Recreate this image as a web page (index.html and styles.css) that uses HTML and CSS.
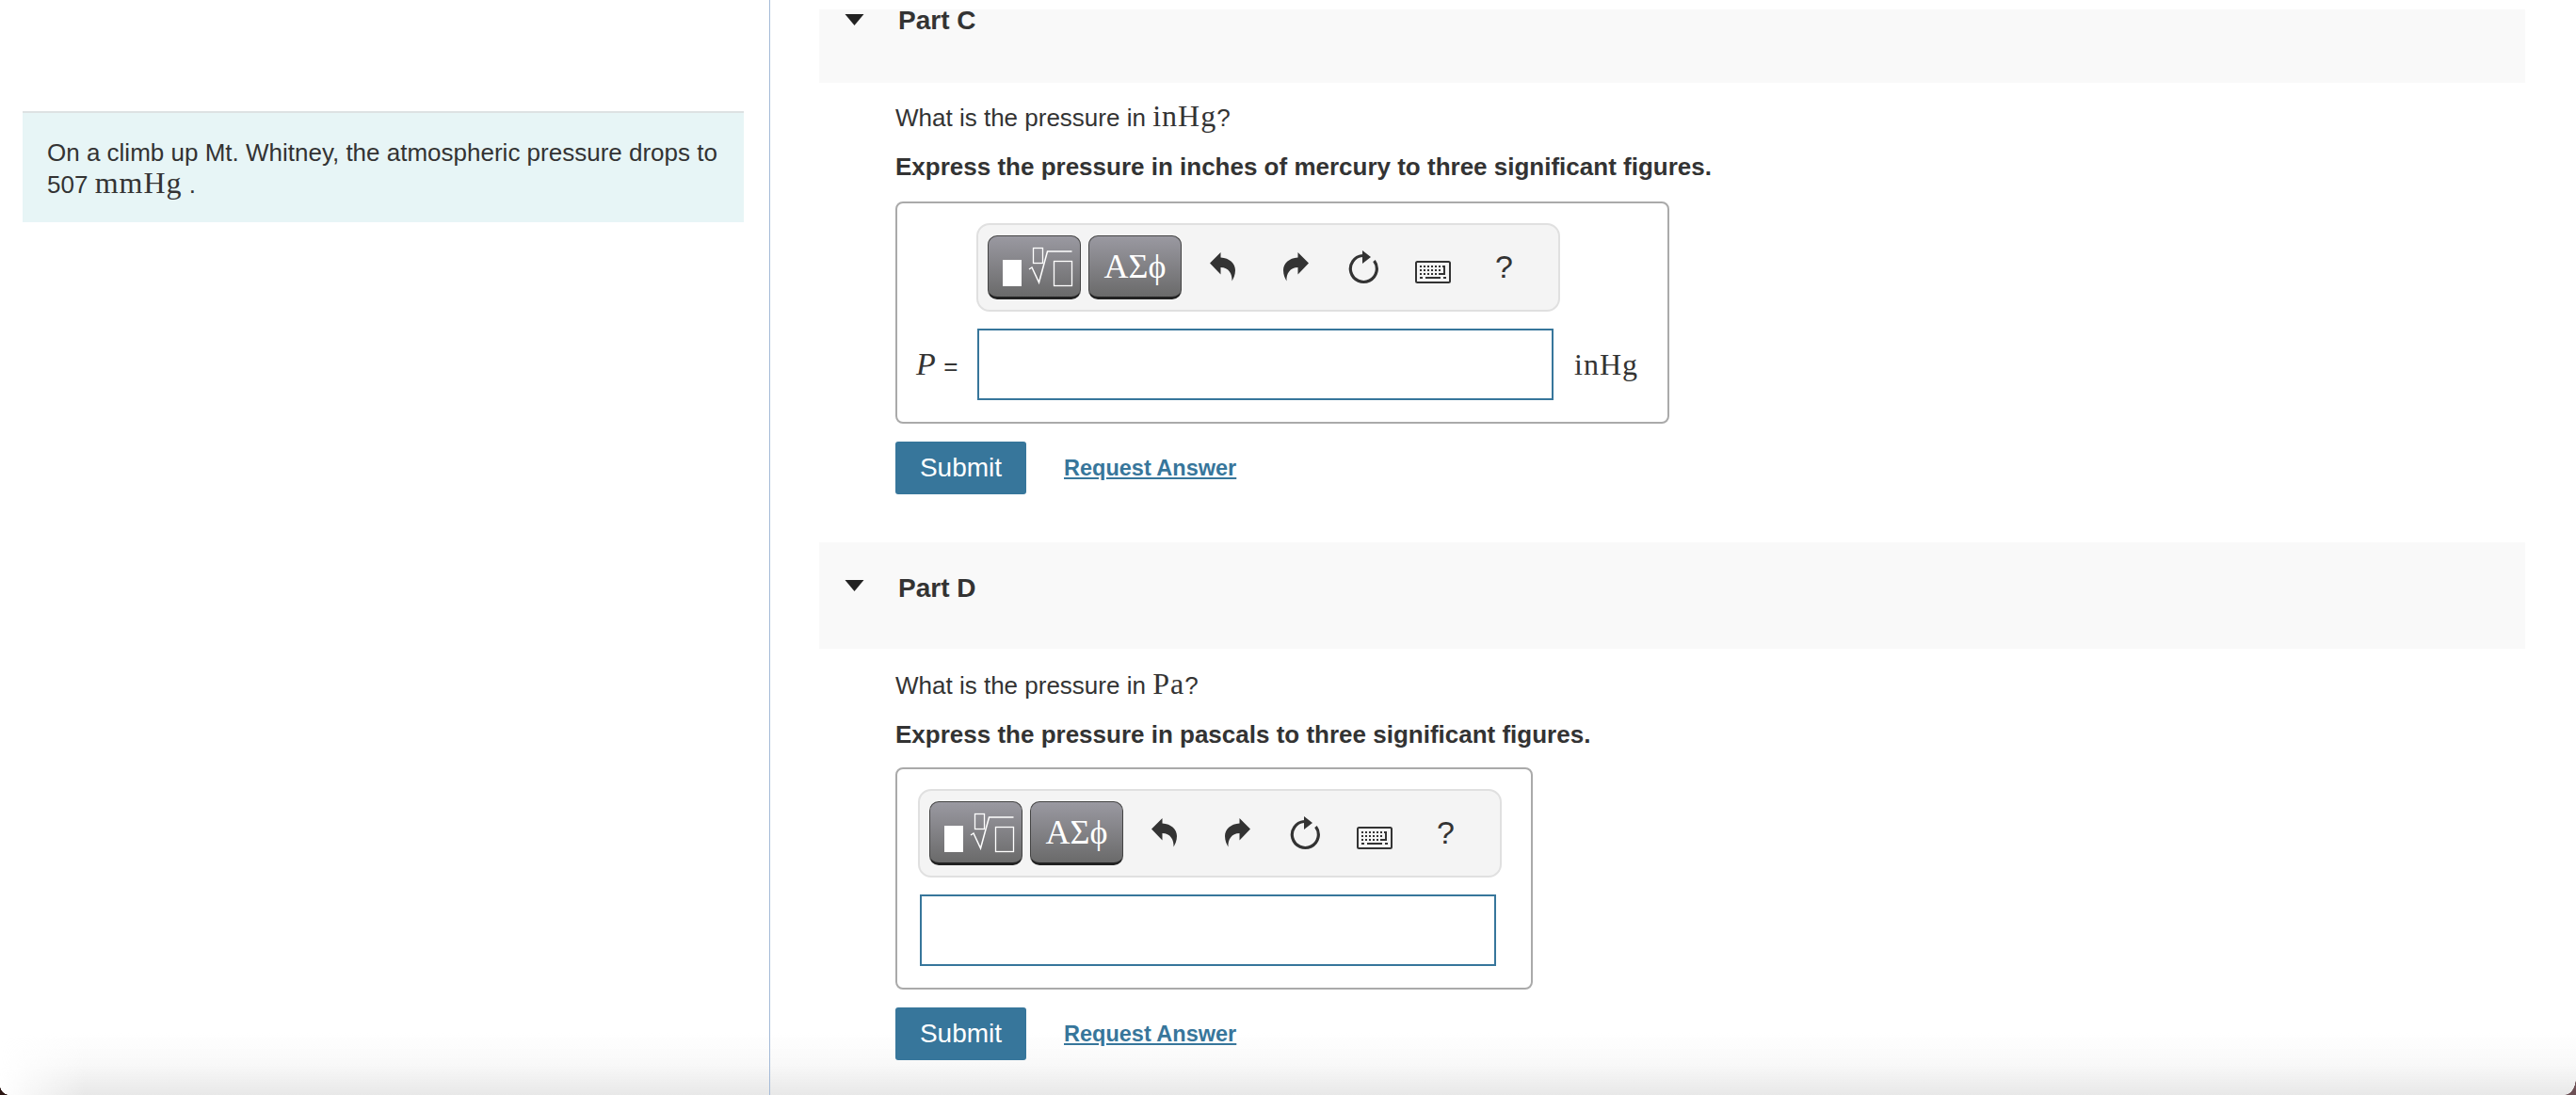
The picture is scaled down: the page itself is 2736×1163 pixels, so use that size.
FILE: index.html
```html
<!DOCTYPE html>
<html lang="en">
<head>
<meta charset="utf-8">
<title>Part C and Part D</title>
<link rel="stylesheet" href="styles.css">
</head>

<body>

<div id="container">
	<div class="side">
		<div class="intro">
			<p>On a climb up Mt. Whitney, the atmospheric pressure drops to <span class="num">507</span> <span class="math">mmHg</span> .</p>
		</div>
	</div>

	<div class="main">
		<div class="part-head part-c">
			<svg class="caret" viewBox="0 0 20 12"><path d="M0 0H20L10 12Z"/></svg>
			<h2>Part C</h2>
		</div>
		<div class="part-body body-c">
			<p class="question">What is the pressure in <span class="math">inHg</span>?</p>
			<p class="instruct">Express the pressure in inches of mercury to three significant figures.</p>

			<div class="answer answer-c">
				<div class="tools tools-c">
					<button class="tool-btn">
						<svg width="97" height="64" viewBox="1 1 97 64"><rect x="16" y="26" width="20" height="28" fill="#fff"/><path d="M44 36l3-2 7.500 16 9-33h26" fill="none" stroke="#fff" stroke-width="1.500"/><rect x="48.500" y="13.500" width="10" height="16" fill="none" stroke="#fff" stroke-width="1.300"/><rect x="70.500" y="27.500" width="19" height="26" fill="none" stroke="#fff" stroke-width="1.300"/></svg>
					</button>
					<button class="tool-btn greek">ΑΣϕ</button>
					<svg class="ico ico-undo" viewBox="0 0 28 32"><path d="M0 12.500L11.500 1V6.500C21 7 27 13 27 20 27 25 25 29 23.500 31.500 24 24 20 17 11.500 17V24.500Z"/></svg>
					<svg class="ico ico-redo" viewBox="0 0 28 32"><path d="M28 12.500L16.500 1V6.500C7 7 1 13 1 20 1 25 3 29 4.500 31.500 4 24 8 17 16.500 17V24.500Z"/></svg>
					<svg class="ico ico-reset" viewBox="0 0 32 36"><path d="M15 5.500A14 14 0 1 0 27.500 11" fill="none" stroke="#333" stroke-width="3.200"/><path d="M15 0L24 7 15 14Z"/></svg>
					<svg class="ico ico-keys" viewBox="0 0 38 24"><rect x="1" y="1" width="36" height="22" rx="1.500" fill="#f4f4f4" stroke="#333" stroke-width="2"/><path d="M5 6h2M9 6h2M13 6h2M17 6h2M21 6h2M25 6h2M29 6h3M5 10h2M9 10h2M13 10h2M17 10h2M21 10h2M25 10h2M31 6v8h-6M5 14h2M9 14h2M13 14h2M17 14h2M21 14h2M5 18h3M11 18h16M30 18h3" stroke="#333" stroke-width="2" fill="none"/></svg>
					<span class="help">?</span>
				</div>
				<div class="input-row">
					<span class="label"><i>P</i> <span class="eq">=</span></span>
					<div class="field"></div>
					<span class="unit math">inHg</span>
				</div>
			</div>

			<div class="actions">
				<button class="submit">Submit</button>
				<a class="req" href="#">Request Answer</a>
			</div>
		</div>

		<div class="part-head part-d">
			<svg class="caret" viewBox="0 0 20 12"><path d="M0 0H20L10 12Z"/></svg>
			<h2>Part D</h2>
		</div>
		<div class="part-body body-d">
			<p class="question">What is the pressure in <span class="math">Pa</span>?</p>
			<p class="instruct">Express the pressure in pascals to three significant figures.</p>

			<div class="answer answer-d">
				<div class="tools">
					<button class="tool-btn">
						<svg width="97" height="64" viewBox="1 1 97 64"><rect x="16" y="26" width="20" height="28" fill="#fff"/><path d="M44 36l3-2 7.500 16 9-33h26" fill="none" stroke="#fff" stroke-width="1.500"/><rect x="48.500" y="13.500" width="10" height="16" fill="none" stroke="#fff" stroke-width="1.300"/><rect x="70.500" y="27.500" width="19" height="26" fill="none" stroke="#fff" stroke-width="1.300"/></svg>
					</button>
					<button class="tool-btn greek">ΑΣϕ</button>
					<svg class="ico ico-undo" viewBox="0 0 28 32"><path d="M0 12.500L11.500 1V6.500C21 7 27 13 27 20 27 25 25 29 23.500 31.500 24 24 20 17 11.500 17V24.500Z"/></svg>
					<svg class="ico ico-redo" viewBox="0 0 28 32"><path d="M28 12.500L16.500 1V6.500C7 7 1 13 1 20 1 25 3 29 4.500 31.500 4 24 8 17 16.500 17V24.500Z"/></svg>
					<svg class="ico ico-reset" viewBox="0 0 32 36"><path d="M15 5.500A14 14 0 1 0 27.500 11" fill="none" stroke="#333" stroke-width="3.200"/><path d="M15 0L24 7 15 14Z"/></svg>
					<svg class="ico ico-keys" viewBox="0 0 38 24"><rect x="1" y="1" width="36" height="22" rx="1.500" fill="#f4f4f4" stroke="#333" stroke-width="2"/><path d="M5 6h2M9 6h2M13 6h2M17 6h2M21 6h2M25 6h2M29 6h3M5 10h2M9 10h2M13 10h2M17 10h2M21 10h2M25 10h2M31 6v8h-6M5 14h2M9 14h2M13 14h2M17 14h2M21 14h2M5 18h3M11 18h16M30 18h3" stroke="#333" stroke-width="2" fill="none"/></svg>
					<span class="help">?</span>
				</div>
				<div class="input-row">
					<div class="field"></div>
				</div>
			</div>

			<div class="actions">
				<button class="submit">Submit</button>
				<a class="req" href="#">Request Answer</a>
			</div>
		</div>
	</div>
</div>

<div class="fade"></div>
<div class="corner corner-left"></div>
<div class="corner corner-right"></div>

</body>
</html>
```

FILE: styles.css
```css
html {
	font-family: 'Liberation Sans', Arial, sans-serif;
}

body {
	background-color: #fff;
	color: #333;
	font-size: 26px;
	height: 1163px;
	margin: 0;
	overflow: hidden;
}

p {
	margin: 0;
}

button {
	font-family: inherit;
}

#container {
	display: flex;
	height: 1163px;
	position: relative;
	z-index: 1;
}

.math {
	font-family: 'Liberation Serif', serif;
	font-size: 32px;
	letter-spacing: 1px;
	line-height: 1;
}

/* left column */
.side {
	border-right: 1px solid #a5bbd8;
	box-sizing: border-box;
	flex: 0 0 818px;
	padding: 118px 27px 0 24px;
}

.intro {
	background-color: #e7f5f6;
	border-top: 2px solid #dde2e3;
	box-sizing: border-box;
	height: 118px;
	line-height: 32px;
	padding: 26px 26px 0;
}

/* right column */
.main {
	flex: 1;
	padding: 10px 54px 0 52px;
}

.part-head {
	background-color: #f9f9f9;
	box-sizing: border-box;
	display: flex;
	padding-left: 27px;
}

.part-c {
	height: 78px;
}

.part-d {
	height: 113px;
	padding-top: 33px;
}

.caret {
	fill: #222;
	height: 12px;
	margin-top: 5px;
	width: 21px;
}

.part-d .caret {
	margin-top: 7px;
}

.part-head h2 {
	font-size: 28px;
	font-weight: bold;
	line-height: 32px;
	margin: 0 0 0 36px;
}

.part-c h2 {
	margin-top: -4px;
}

.part-body {
	padding: 0 0 0 81px;
}

.body-c {
	height: 488px;
}

.question {
	line-height: 36px;
	padding-top: 19px;
}

.body-d .question {
	padding-top: 21px;
}

.instruct {
	font-weight: bold;
	line-height: 32px;
	margin-top: 18px;
}

.answer {
	background-color: #fff;
	border: 2px solid #aaa;
	border-radius: 8px;
	box-sizing: border-box;
	height: 236px;
	margin-top: 21px;
	padding: 21px 0 0 22px;
}

.answer-c {
	width: 822px;
}

.answer-d {
	margin-top: 19px;
	width: 677px;
}

/* the math toolbar */
.tools {
	align-items: center;
	background-color: #f4f4f4;
	border: 2px solid #e0e0e0;
	border-radius: 14px;
	box-sizing: border-box;
	display: flex;
	height: 94px;
	padding-left: 10px;
	width: 620px;
}

.tools-c {
	margin-left: 62px;
}

.tool-btn {
	align-items: center;
	background: linear-gradient(#9a99a1, #6a6a6a);
	border: 1px solid #444;
	border-bottom: 3px solid #222;
	border-radius: 10px;
	box-sizing: border-box;
	color: #fff;
	display: flex;
	height: 68px;
	justify-content: center;
	margin-right: 8px;
	padding: 0;
	width: 99px;
}

.greek {
	font-family: 'Liberation Serif', serif;
	font-size: 36px;
}

.ico {
	display: block;
	fill: #333;
	flex: none;
}

.ico-undo {
	height: 32px;
	margin-bottom: 2px;
	margin-left: 22px;
	width: 28px;
}

.ico-redo {
	height: 32px;
	margin-bottom: 2px;
	margin-left: 49px;
	width: 28px;
}

.ico-reset {
	height: 36px;
	margin-left: 42px;
	width: 32px;
}

.ico-keys {
	height: 24px;
	margin-left: 39px;
	margin-top: 9px;
	width: 38px;
}

.help {
	font-size: 34px;
	margin-bottom: 2px;
	margin-left: 47px;
}

.input-row {
	align-items: center;
	display: flex;
	margin-top: 18px;
}

.label {
	font-family: 'Liberation Serif', serif;
	font-size: 34px;
	margin-left: -2px;
	width: 65px;
}

.eq {
	font-family: 'Liberation Sans', sans-serif;
	font-size: 26px;
}

.field {
	background-color: #fff;
	border: 2px solid #37769b;
	box-sizing: border-box;
	height: 76px;
	width: 612px;
}

.answer-d .field {
	margin-left: 2px;
}

.unit {
	margin-left: 22px;
}

.actions {
	align-items: center;
	display: flex;
	margin-top: 19px;
}

.submit {
	background-color: #37769b;
	border: 0;
	border-radius: 3px;
	color: #fff;
	font-size: 28px;
	height: 56px;
	padding: 0;
	width: 139px;
}

.req {
	color: #37769b;
	font-size: 23.500px;
	font-weight: bold;
	margin-left: 40px;
}

/* shadow along the bottom edge of the window */
.fade {
	background: linear-gradient(rgba(232, 232, 232, 0), rgba(232, 232, 232, 0.27) 50%, #e8e8e8);
	bottom: 0;
	height: 66px;
	left: 0;
	-webkit-mask-image: linear-gradient(to right, transparent, #000 90px);
	mask-image: linear-gradient(to right, transparent, #000 90px);
	pointer-events: none;
	position: absolute;
	right: 0;
}

.corner {
	bottom: 0;
	position: absolute;
	z-index: 2;
}

.corner-left {
	background: radial-gradient(ellipse 10px 10px at 100% 0, transparent 97%, #2a1512);
	height: 10px;
	left: 0;
	width: 10px;
}

.corner-right {
	background: radial-gradient(ellipse 12px 18px at 0 0, transparent 97%, #6d5055);
	height: 18px;
	right: 0;
	width: 12px;
}
```
